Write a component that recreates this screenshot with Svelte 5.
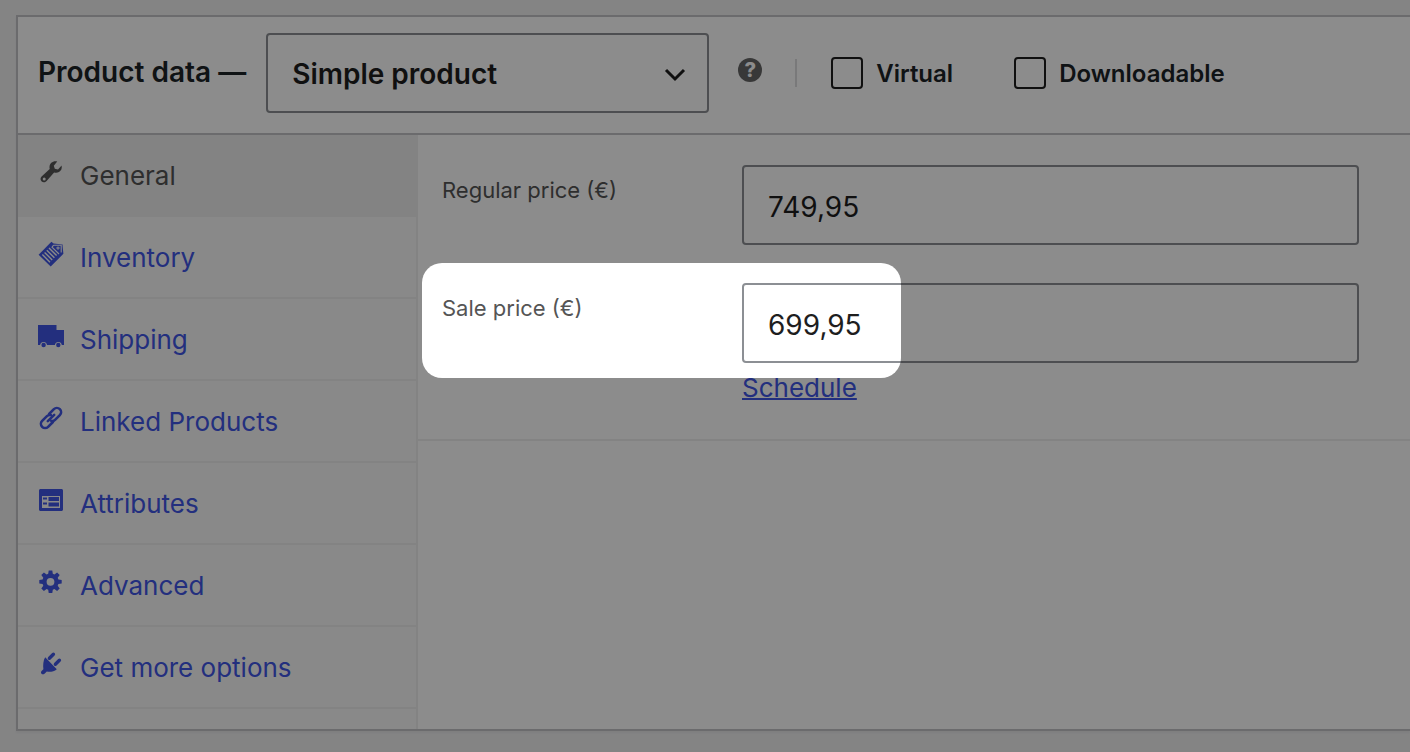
<script>
    let productType = $state("simple");
    let virtual = $state(false);
    let downloadable = $state(false);
    let regularPrice = $state("749,95");
    let salePrice = $state("699,95");
    let activeTab = $state("general");

    const tabs = [
        { id: "general", label: "General" },
        { id: "inventory", label: "Inventory" },
        { id: "shipping", label: "Shipping" },
        { id: "linked", label: "Linked Products" },
        { id: "attributes", label: "Attributes" },
        { id: "advanced", label: "Advanced" },
        { id: "more", label: "Get more options" },
    ];

    function selectTab(event, id) {
        event.preventDefault();
        activeTab = id;
    }
</script>

{#snippet icon(id)}
    <svg class="icon" viewBox="0 0 26 26" aria-hidden="true">
        {#if id === "general"}
            <path fill-rule="evenodd" d="M23.6 6.6c.6 3-.4 5.3-2.6 6.4-1.7.9-3.4.9-4.9.4L8.6 21.9c-1.3 1.5-3.4 1.8-4.9.6-1.5-1.3-1.6-3.5-.1-4.9l8.100-7.700c-.6-2.300 0-4.600 1.600-6.100 1.800-1.700 4.200-2.100 5.900-1.200l-3.400 4.100 1 3.100 3.200.6zM6.200 18.500a1.500 1.500 0 1 0 0 3 1.500 1.500 0 0 0 0-3z" />
        {:else if id === "inventory"}
            <path d="M13.4.8l2.200 1.700 9 1v1.700l.8 7.600L12.700 25.600.6 13.800z" />
            <path class="line" stroke-width="1.4" d="M4.400 13.600l7.600 7.600M6.600 11.400l7.600 7.600M8.800 9.200l7.600 7.600M11 7l7.600 7.600" />
            <path class="line" stroke-width="1.100" d="M15.600 4.200h7.600v7.400M15.600 4.200l-1.600 2 7 6.800M18.200 7h3.600M20 5.400v3.400" />
        {:else if id === "shipping"}
            <path d="M0 2h18.500v5H26v15h-2.200a3.500 3.500 0 0 0-6.900 0H9a3.500 3.500 0 0 0-6.900 0H0z" />
            <circle cx="5.6" cy="22" r="2.2" />
            <circle cx="20.3" cy="22" r="2.2" />
        {:else if id === "linked"}
            <g class="stroke" stroke-width="2.600" transform="rotate(-45 13 13)">
                <path d="M11.500 17.200H4.700a4.200 4.200 0 0 1 0-8.400h6.800a4 4 0 0 1 3.400 2" />
                <path d="M14.500 8.800h6.800a4.200 4.200 0 0 1 0 8.400h-6.800a4 4 0 0 1-3.400-2" />
                <path d="M8.500 13h9" />
            </g>
        {:else if id === "attributes"}
            <path fill-rule="evenodd" d="M2.500 2h21c.8 0 1.500.6 1.500 1.500v19c0 .8-.7 1.500-1.500 1.500h-21C1.700 24 1 23.300 1 22.500v-19C1 2.600 1.700 2 2.500 2zM4 9v12h18V9z" />
            <path d="M5 10.500h4v2H5zM10.500 10H21v4H10.500zM5 15.500h4v2H5zM10.500 15.500H21v4H10.500z" />
        {:else if id === "advanced"}
            <path fill-rule="evenodd" d="M10.700 1.500h3.600l.5 3.300 1.600.7 2.700-2 2.600 2.600-2 2.700.7 1.600 3.300.5v3.700l-3.300.5-.7 1.600 2 2.700-2.600 2.600-2.700-2-1.600.7-.5 3.300h-3.600l-.5-3.300-1.600-.7-2.700 2-2.600-2.600 2-2.700-.7-1.600-3.300-.5v-3.700l3.300-.5.7-1.600-2-2.700 2.600-2.600 2.700 2 1.600-.7zM12.500 8.900a3.900 3.900 0 1 0 0 7.800 3.900 3.900 0 0 0 0-7.800z" />
        {:else}
            <path d="M7.200 6.200l11.600 12.100c-2.700 2.300-6.600 3-10 2.300l-2 1.900c-1.300 1.200-2.700 1-3.300.3-.7-.8-.7-2 .3-3l1.600-1.500c-.5-4.100-.2-9 1.800-12.100z" />
            <path class="stroke" stroke-width="3.400" d="M11.400 7.200l4-3.900M17.400 13.200l4-3.900" />
        {/if}
    </svg>
{/snippet}

<section class="panel">
    <header>
        <label class="title" for="product-type">Product data —</label>
        <div class="type">
            <select id="product-type" bind:value={productType}>
                <option value="simple">Simple product</option>
                <option value="grouped">Grouped product</option>
                <option value="external">External/Affiliate product</option>
                <option value="variable">Variable product</option>
            </select>
            <svg viewBox="0 0 24 16" aria-hidden="true">
                <path d="M3 3l9 9 9-9" />
            </svg>
        </div>
        <button class="help" type="button" aria-label="Help">?</button>
        <div class="checks">
            <label><input type="checkbox" bind:checked={virtual} /><span>Virtual</span></label>
            <label><input type="checkbox" bind:checked={downloadable} /><span>Downloadable</span></label>
        </div>
    </header>

    <div class="body">
        <nav>
            {#each tabs as tab}
                <a
                    href="#{tab.id}"
                    class:active={activeTab === tab.id}
                    onclick={(event) => selectTab(event, tab.id)}
                >
                    {@render icon(tab.id)}
                    <span>{tab.label}</span>
                </a>
            {/each}
        </nav>

        <main>
            <div class="fields">
                <div class="field">
                    <label for="regular-price">Regular price (€)</label>
                    <input id="regular-price" type="text" bind:value={regularPrice} />
                </div>
                <div class="field">
                    <label for="sale-price">Sale price (€)</label>
                    <div class="control">
                        <input id="sale-price" type="text" bind:value={salePrice} />
                        <a href="#schedule">Schedule</a>
                    </div>
                    <div class="spotlight"></div>
                </div>
            </div>
        </main>
    </div>
</section>

<style>
    :global(body) {
        margin: 0;
        overflow: hidden;
        background: #f0f0f1;
        color: #1d2327;
        font-family: Inter, "Liberation Sans", sans-serif;
    }

    .panel {
        margin: 15px 0 24px 16px;
        border: 2px solid #c3c4c7;
        border-right: 0;
        background: #fff;
        box-shadow: 0 2px 2px rgba(0, 0, 0, 0.04);
    }

    header {
        display: flex;
        align-items: center;
        padding: 16px 20px 20px;
        border-bottom: 2px solid #c3c4c7;
        font-weight: 600;
        white-space: nowrap;
    }

    .title {
        margin-right: 20px;
        padding-bottom: 2px;
        font-size: 28px;
        line-height: 36px;
    }

    .type {
        position: relative;
    }

    .type svg {
        position: absolute;
        top: 34px;
        right: 22px;
        width: 24px;
        height: 16px;
        fill: none;
        stroke: #1e1e1e;
        stroke-width: 3;
        pointer-events: none;
    }

    select {
        appearance: none;
        display: block;
        box-sizing: border-box;
        width: 443px;
        height: 80px;
        padding: 2px 48px 0 24px;
        border: 2px solid #8c8f94;
        border-radius: 4px;
        background: #fff;
        color: #1e1e1e;
        font: inherit;
        font-size: 28px;
    }

    .help {
        width: 24px;
        height: 24px;
        margin: 0 33px 6px 29px;
        padding: 0;
        border: 0;
        border-radius: 50%;
        background: #666;
        color: #fff;
        font: inherit;
        font-size: 20px;
        font-weight: 800;
        line-height: 24px;
    }

    .checks {
        display: flex;
        gap: 61px;
        align-items: center;
        position: relative;
        padding-left: 36px;
    }

    .checks::before {
        content: "";
        position: absolute;
        left: 0;
        top: 2px;
        width: 2px;
        height: 28px;
        background: #dcdcde;
    }

    .checks label {
        display: flex;
        align-items: center;
        gap: 13px;
        font-size: 24px;
        line-height: 30px;
    }

    .checks span {
        padding-top: 2px;
    }

    .checks input {
        appearance: none;
        box-sizing: border-box;
        width: 32px;
        height: 32px;
        margin: 0;
        border: 2px solid #1e1e1e;
        border-radius: 4px;
        background: #fff;
    }

    .checks input:checked {
        background: #4056e6;
    }

    .body {
        display: flex;
    }

    nav {
        flex: 0 0 398px;
        padding-bottom: 20px;
        border-right: 2px solid #eee;
        background: #fafafa;
    }

    nav a {
        display: flex;
        align-items: center;
        gap: 16px;
        padding: 21px 20px 19px;
        border-bottom: 2px solid #eee;
        color: #4056e6;
        font-size: 26px;
        line-height: 40px;
        text-decoration: none;
    }

    nav a.active {
        background: #eee;
        color: #555;
    }

    .icon {
        width: 26px;
        height: 26px;
        margin-bottom: 8px;
        fill: currentColor;
    }

    .icon .stroke {
        fill: none;
        stroke: currentColor;
        stroke-linecap: round;
    }

    .icon .line {
        fill: none;
        stroke: #fafafa;
    }

    main {
        flex: 1;
        min-width: 0;
    }

    .fields {
        display: flex;
        flex-direction: column;
        gap: 38px;
        padding: 30px 51px 26px 24px;
        border-bottom: 2px solid #eee;
    }

    .field {
        display: grid;
        grid-template-columns: 300px 1fr;
        position: relative;
    }

    .field label {
        color: #555;
        font-size: 22px;
        line-height: 50px;
    }

    .field input {
        box-sizing: border-box;
        display: block;
        width: 100%;
        height: 80px;
        padding: 4px 24px 0;
        border: 2px solid #8c8f94;
        border-radius: 4px;
        background: #fff;
        color: #1e1e1e;
        font: inherit;
        font-size: 28px;
    }

    .control a {
        color: #4056e6;
        font-size: 26px;
        line-height: 50px;
        text-decoration-thickness: 2px;
    }

    /* dims everything around the sale price */
    .spotlight {
        position: absolute;
        top: -20px;
        left: -20px;
        width: 479px;
        height: 115px;
        border-radius: 20px;
        box-shadow: 0 0 0 9999px rgba(0, 0, 0, 0.45);
        pointer-events: none;
    }
</style>
